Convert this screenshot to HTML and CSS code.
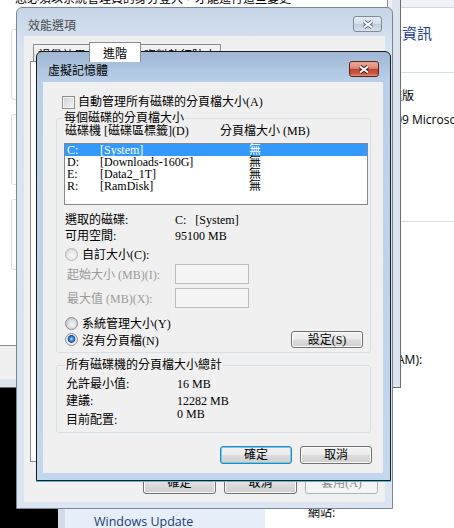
FILE: index.html
```html
<!DOCTYPE html>
<html lang="zh-Hant">
<head>
    <meta charset="UTF-8">
    <meta name="viewport" content="width=device-width, initial-scale=1.0">
    <title>虛擬記憶體</title>
    <link rel="stylesheet" href="styles.css">
</head>
<body>
<div class="desktop">

    <!-- control panel: system page, behind everything -->
    <div class="cp-window">
        <div class="cp-nav">
            <div class="cp-link">Windows Update</div>
        </div>
        <div class="cp-main">
            <div class="cp-bar"></div>
            <div class="cp-heading">檢視電腦的基本資訊</div>
            <div class="cp-rule"></div>
            <div class="cp-text cp-edition">旗艦版</div>
            <div class="cp-text cp-copy"><span class="cp-pre"><span>Copyright © 200</span></span>9 Microsoft Corporation。</div>
            <div class="cp-rule cp-rule-2"></div>
            <div class="cp-text cp-ram"><span class="cp-pre cp-pre-ram"><span>已安裝的記憶體 (R</span></span>AM):</div>
            <div class="cp-text cp-site">網站:</div>
        </div>
    </div>

    <!-- system properties dialog -->
    <div class="sys-window">
        <div class="sys-client">
            <div class="sys-page">
                <div class="sys-note">您必須以系統管理員的身分登入，才能進行這些變更。</div>
                <div class="sys-group"></div>
                <div class="sys-group"></div>
                <div class="sys-group"></div>
            </div>
        </div>
    </div>

    <!-- performance options dialog (inactive) -->
    <div class="win perf">
        <div class="title-bar">
            <span class="title">效能選項</span>
            <span class="close-btn">
                <svg width="14" height="11" viewBox="0 0 14 11"><path d="M3 2.5 L11 8.5 M11 2.5 L3 8.5" stroke="#5f6b7a" stroke-width="4" fill="none"/><path d="M3 2.5 L11 8.5 M11 2.5 L3 8.5" stroke="#fff" stroke-width="2" fill="none"/></svg>
            </span>
        </div>
        <div class="client perf-client">
            <div class="tabs">
                <div class="tab">視覺效果</div>
                <div class="tab selected">進階</div>
                <div class="tab">資料執行防止</div>
            </div>
            <div class="tab-page"></div>
            <div class="btn-row perf-buttons">
                <button class="btn btn-wide">確定</button>
                <button class="btn btn-wide">取消</button>
                <button class="btn btn-wide" disabled>套用(A)</button>
            </div>
        </div>
    </div>

    <!-- virtual memory dialog (active) -->
    <div class="win vm">
        <div class="title-bar vm-title-bar">
            <span class="title vm-title">虛擬記憶體</span>
            <span class="close-btn close-red">
                <svg width="14" height="11" viewBox="0 0 14 11"><path d="M3 2.5 L11 8.5 M11 2.5 L3 8.5" stroke="#4a1a12" stroke-width="4" fill="none"/><path d="M3 2.5 L11 8.5 M11 2.5 L3 8.5" stroke="#fff" stroke-width="2" fill="none"/></svg>
            </span>
        </div>
        <div class="client vm-client">
            <div class="check-row"><span class="checkbox"></span>自動管理所有磁碟的分頁檔大小(A)</div>

            <fieldset class="group group-drives">
                <legend>每個磁碟的分頁檔大小</legend>
                <div class="drive-head">
                    <span>磁碟機 [磁碟區標籤](D)</span>
                    <span>分頁檔大小 (MB)</span>
                </div>
                <div class="listbox">
                    <div class="drive-row selected"><span>C:</span><span>[System]</span><span>無</span></div>
                    <div class="drive-row"><span>D:</span><span>[Downloads-160G]</span><span>無</span></div>
                    <div class="drive-row"><span>E:</span><span>[Data2_1T]</span><span>無</span></div>
                    <div class="drive-row"><span>R:</span><span>[RamDisk]</span><span>無</span></div>
                </div>
                <div class="info-grid">
                    <span>選取的磁碟:</span><span>C:&nbsp;&nbsp;&nbsp;[System]</span>
                    <span>可用空間:</span><span>95100 MB</span>
                </div>
                <div class="radio-row first-radio"><span class="radio disabled"></span>自訂大小(C):</div>
                <div class="size-row"><span class="dim">起始大小 (MB)(I):</span><span class="textbox"></span></div>
                <div class="size-row size-row-2"><span class="dim">最大值 (MB)(X):</span><span class="textbox"></span></div>
                <div class="radio-row sys-radio"><span class="radio"></span>系統管理大小(Y)</div>
                <div class="radio-row set-row">
                    <span class="radio-label"><span class="radio checked"></span>沒有分頁檔(N)</span>
                    <button class="btn btn-set">設定(S)</button>
                </div>
            </fieldset>

            <fieldset class="group group-total">
                <legend>所有磁碟機的分頁檔大小總計</legend>
                <div class="total-grid">
                    <span>允許最小值:</span><span>16 MB</span>
                    <span>建議:</span><span>12282 MB</span>
                    <span class="last-label">目前配置:</span><span class="last-value">0 MB</span>
                </div>
            </fieldset>

            <div class="btn-row vm-buttons">
                <button class="btn btn-default">確定</button>
                <button class="btn">取消</button>
            </div>
        </div>
    </div>

</div>
</body>
</html>
```

FILE: styles.css
```css
* {
    box-sizing: border-box;
}
body {
    margin: 0;
    width: 454px;
    height: 528px;
    overflow: hidden;
    background-color: #000;
    font-family: "Liberation Serif", "Noto Sans CJK TC", serif;
    font-size: 12px;
    color: #000;
}
.desktop {
    position: relative;
    width: 454px;
    height: 528px;
    overflow: hidden;
}

/* control panel window */
.cp-window {
    position: absolute;
    left: 58px;
    top: -30px;
    width: 410px;
    height: 580px;
    display: flex;
    border-left: 7px solid #d3dbe6;
    font-family: "Open Sans", "Noto Sans CJK TC", sans-serif;
}
.cp-nav {
    flex-shrink: 0;
    width: 200px;
    background-color: #e6eef9;
    display: flex;
    flex-direction: column;
    justify-content: flex-end;
    padding: 0 0 20px 29px;
}
.cp-link {
    color: #1e3a78;
    font-size: 12.5px;
    line-height: 16px;
    white-space: nowrap;
}
.cp-main {
    flex: 1;
    min-width: 0;
    overflow: hidden;
    background-color: #fff;
}
.cp-bar {
    height: 38px;
    background-color: #eef2f7;
    border-bottom: 1px solid #ccd5e0;
}
.cp-heading {
    margin-top: 15px;
    padding-left: 32px;
    font-size: 15px;
    line-height: 20px;
    color: #1e3c9a;
    white-space: nowrap;
}
.cp-rule {
    margin: 29px 0 0 32px;
    height: 1px;
    background-color: #d5dfe5;
}
.cp-rule-2 {
    margin-top: 93px;
}
.cp-text {
    font-size: 12px;
    line-height: 16px;
    white-space: nowrap;
    padding-left: 32px;
}
.cp-edition {
    margin-top: 15px;
    padding-left: 113px;
}
.cp-copy {
    margin-top: 8px;
}
.cp-pre {
    display: inline-flex;
    justify-content: flex-end;
    width: 105px;
    overflow: hidden;
    vertical-align: top;
}
.cp-pre span {
    flex-shrink: 0;
}
.cp-ram {
    margin-top: 130px;
}
.cp-pre-ram {
    width: 100px;
}
.cp-site {
    margin-top: 137px;
    padding-left: 43px;
}

/* system properties window */
.sys-window {
    position: absolute;
    left: -20px;
    top: -40px;
    width: 421px;
    height: 428px;
    padding: 30px 8px 8px 8px;
    background-color: #dce4ed;
    border-right: 1px solid #6d6d6d;
    border-bottom: 1px solid #6d6d6d;
}
.sys-client {
    height: 100%;
    background-color: #f0f0f0;
    padding: 0 4px;
}
.sys-page {
    height: 356px;
    background-color: #fff;
    border: 1px solid #898c95;
    padding-left: 22px;
    overflow: hidden;
}
.sys-note {
    line-height: 16px;
    white-space: nowrap;
}
.sys-group {
    margin: 22px 0 0 -4px;
    width: 400px;
    height: 71px;
    border: 1px solid #d5dfe5;
    border-radius: 3px;
}
.sys-group + .sys-group {
    margin-top: 14px;
}

/* dialog windows */
.win {
    position: absolute;
    display: flex;
    flex-direction: column;
    border-radius: 6px 6px 0 0;
}
.title-bar {
    display: flex;
    justify-content: space-between;
    align-items: flex-start;
    flex-shrink: 0;
}
.title {
    line-height: 18px;
    font-family: "Noto Sans CJK TC", sans-serif;
}
.close-btn {
    width: 29px;
    height: 16px;
    border: 1px solid #7d8a9b;
    border-radius: 3px;
    background: linear-gradient(#e6edf5, #d3deea 48%, #bfcddd 52%, #d6e1ec);
    display: flex;
    align-items: center;
    justify-content: center;
}
.close-red {
    width: 30px;
    border-color: #5e2218;
    background: linear-gradient(#e9a898, #dc8a77 45%, #c2432d 52%, #c9553e 80%, #dc8d78);
}
.client {
    flex: 1;
    background-color: #f0f0f0;
    display: flex;
    flex-direction: column;
}

/* performance options */
.perf {
    left: 16px;
    top: 7px;
    width: 377px;
    height: 502px;
    border: 1px solid #7a8899;
    padding: 0 7px 7px;
    background: linear-gradient(#c6d5e7, #d9e4f1 40px, #dbe6f2);
}
.perf .title-bar {
    height: 28px;
    padding: 8px 3px 0 4px;
}
.perf .title {
    color: #4a4a4a;
}
.perf-client {
    padding: 0 6px 8px;
}
.tabs {
    height: 25px;
    display: flex;
    align-items: flex-end;
    padding-left: 3px;
}
.tab {
    height: 17px;
    padding: 2px 4px 0;
    border: 1px solid #898c95;
    border-bottom: none;
    background: linear-gradient(#f3f3f3, #e4e4e4);
    font-family: "Noto Sans CJK TC", sans-serif;
    line-height: 16px;
}
.tab.selected {
    position: relative;
    z-index: 1;
    height: 20px;
    margin: 0 -2px -1px;
    padding: 2px 13px 0;
    background: #fff;
}
.tab-page {
    height: 401px;
    background-color: #fff;
    border: 1px solid #898c95;
}
.btn-row {
    display: flex;
    justify-content: flex-end;
    gap: 8px;
}
.perf-buttons {
    margin-top: 9px;
    padding-right: 1px;
}

/* buttons */
.btn {
    width: 72px;
    height: 18px;
    padding: 0;
    border: 1px solid #707070;
    border-radius: 3px;
    background: linear-gradient(#f2f2f2 0%, #ebebeb 48%, #dddddd 52%, #cfcfcf 100%);
    box-shadow: inset 0 0 0 1px #fbfbfb;
    font-family: "Liberation Serif", "Noto Sans CJK TC", serif;
    font-size: 12px;
    line-height: 14px;
    color: #000;
}
.btn-wide {
    width: 73px;
    height: 23px;
}
.btn:disabled {
    border-color: #adb2b5;
    background: #f4f4f4;
    box-shadow: none;
    color: #8b8b8b;
}
.btn-default {
    border-color: #3c7fb1;
    box-shadow: inset 0 0 0 1px #5fd3f5;
}

/* virtual memory */
.vm {
    left: 36px;
    top: 51px;
    width: 355px;
    height: 430px;
    border: 1px solid #1a1a1a;
    padding: 0 7px 7px 6px;
    background: linear-gradient(#9fb7d5, #bad0e9 30px, #c3d8ee);
    box-shadow: 0 1px 0 #46bddf;
}
.vm-title-bar {
    height: 30px;
    padding: 9px 4px 0 5px;
}
.vm-client {
    padding: 0 12px 0 13px;
}
.check-row {
    margin: 13px 0 0 6px;
    display: flex;
    align-items: center;
    gap: 3px;
    line-height: 14px;
}
.checkbox {
    width: 13px;
    height: 13px;
    border: 1px solid #8e8f8f;
    background: linear-gradient(135deg, #cdd1d6, #f4f4f4);
    box-shadow: inset 0 0 0 1px #f4f4f4;
}
.group {
    margin: 2px 0 0;
    padding: 0 7px 4px;
    min-width: 0;
    border: 1px solid #d5dfe5;
    border-radius: 3px;
}
.group legend {
    margin-left: -1px;
    padding: 0 1px;
    line-height: 14px;
}
.drive-head {
    display: grid;
    grid-template-columns: 155px auto;
    margin-left: 1px;
    line-height: 12px;
}
.listbox {
    margin: 6px -5px 0 0;
    height: 62px;
    border: 1px solid #828790;
    background-color: #fff;
}
.drive-row {
    display: grid;
    grid-template-columns: 33px 149px auto;
    height: 12px;
    padding-left: 2px;
    line-height: 12px;
}
.drive-row.selected {
    background-color: #3399ff;
    color: #fff;
}
.info-grid {
    display: grid;
    grid-template-columns: 110px auto;
    margin: 7px 0 0 1px;
    line-height: 16px;
}
.radio-row {
    display: flex;
    align-items: center;
    gap: 4px;
    margin-left: 1px;
    height: 16px;
}
.first-radio {
    margin-top: 2px;
}
.sys-radio {
    margin-top: 7px;
}
.radio {
    width: 13px;
    height: 13px;
    border: 1px solid #8e8f8f;
    border-radius: 50%;
    background: radial-gradient(circle at 55% 60%, #f7f7f7 0, #e2e4e7 3px, #c9cdd2 6px);
}
.radio.disabled {
    border-color: #b4b4b4;
    background: radial-gradient(circle at 55% 60%, #f7f7f7 0, #eaeaea 4px, #dcdcdc 6px);
}
.radio.checked {
    background: radial-gradient(circle at 50% 45%, #bfe6ff 0, #3b88d8 2px, #1b4f9e 3.5px, #e3e6ea 4.2px, #f6f6f6 6px);
}
.set-row {
    height: 17px;
    justify-content: space-between;
}
.radio-label {
    display: flex;
    align-items: center;
    gap: 4px;
}
.btn-set {
    height: 17px;
}
.size-row {
    display: grid;
    grid-template-columns: 111px 74px;
    align-items: center;
    height: 20px;
    margin-top: 2px;
}
.size-row-2 {
    margin-top: 4px;
}
.dim {
    margin-left: 3px;
    color: #9a9a9a;
}
.textbox {
    height: 20px;
    border: 1px solid #b9bcc0;
    background-color: #f4f4f4;
}
.group-total {
    margin-top: 5px;
    padding: 5px 7px 5px 9px;
}
.total-grid {
    display: grid;
    grid-template-columns: 111px auto;
    row-gap: 3px;
    line-height: 14px;
}
.last-label {
    margin-top: 2px;
}
.last-value {
    align-self: start;
    margin-top: -4px;
}
.vm-buttons {
    margin: 13px -1px 0 0;
}
```
